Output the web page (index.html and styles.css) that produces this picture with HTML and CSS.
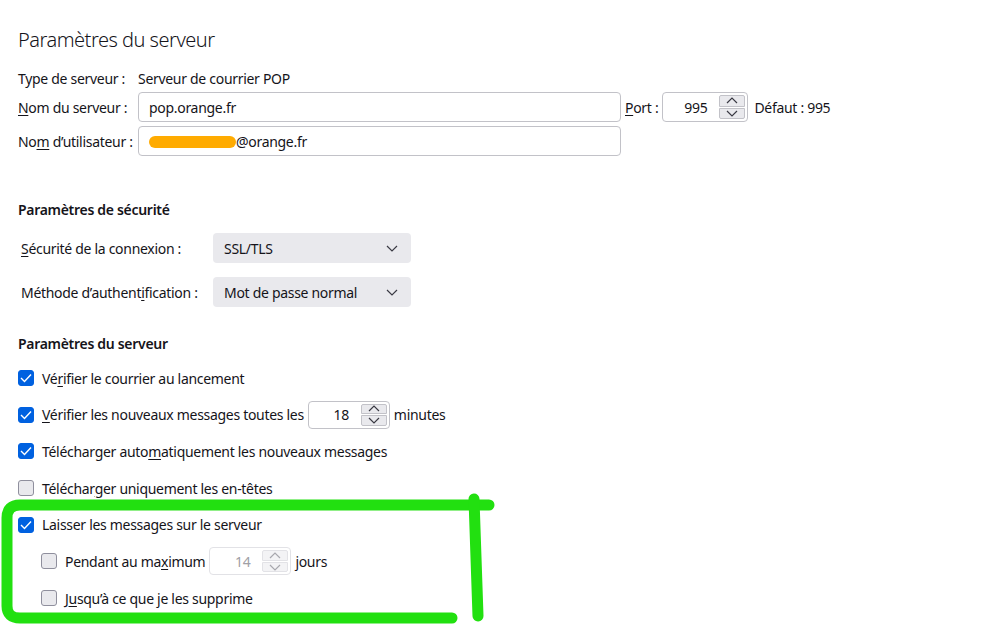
FILE: index.html
```html
<!DOCTYPE html>
<html lang="fr">
<head>
    <meta charset="UTF-8">
    <title>Paramètres du serveur</title>
    <link rel="stylesheet" href="styles.css">
</head>
<body>
    <div class="page">
        <h1 class="title">Paramètres du serveur</h1>

        <div class="server-grid">
            <div class="label">Type de serveur :</div>
            <div class="value">Serveur de courrier POP</div>

            <div class="label"><u>N</u>om du serveur :</div>
            <div class="field-row">
                <div class="textbox wide">pop.orange.fr</div>
                <span class="port-label"><u>P</u>ort :</span>
                <div class="spinner port">
                    <span class="spin-value">995</span>
                    <div class="spin-buttons">
                        <span class="spin-btn"><svg width="12" height="7" viewBox="0 0 12 7"><path d="M1 6 L6 1 L11 6" /></svg></span>
                        <span class="spin-btn"><svg width="12" height="7" viewBox="0 0 12 7"><path d="M1 1 L6 6 L11 1" /></svg></span>
                    </div>
                </div>
                <span class="default">Défaut : 995</span>
            </div>

            <div class="label">No<u>m</u> d’utilisateur :</div>
            <div class="field-row">
                <div class="textbox wide"><span class="blur"></span>@orange.fr</div>
            </div>
        </div>

        <h2 class="section">Paramètres de sécurité</h2>
        <div class="security-grid">
            <div class="label"><u>S</u>écurité de la connexion :</div>
            <div class="select">
                <span>SSL/TLS</span>
                <svg width="12" height="7" viewBox="0 0 12 7"><path d="M1 1 L6 6 L11 1" /></svg>
            </div>
            <div class="label">Méthode d’authent<u>i</u>fication :</div>
            <div class="select">
                <span>Mot de passe normal</span>
                <svg width="12" height="7" viewBox="0 0 12 7"><path d="M1 1 L6 6 L11 1" /></svg>
            </div>
        </div>

        <h2 class="section section-server">Paramètres du serveur</h2>
        <div class="options">
            <div class="option">
                <span class="checkbox checked"><svg width="12" height="10" viewBox="0 0 12 10"><path d="M1 5 L4.5 8.5 L11 1.5" /></svg></span>
                <span>Vé<u>r</u>ifier le courrier au lancement</span>
            </div>
            <div class="option">
                <span class="checkbox checked"><svg width="12" height="10" viewBox="0 0 12 10"><path d="M1 5 L4.5 8.5 L11 1.5" /></svg></span>
                <span><u>V</u>érifier les nouveaux messages toutes les</span>
                <div class="spinner small">
                    <span class="spin-value">18</span>
                    <div class="spin-buttons">
                        <span class="spin-btn"><svg width="12" height="7" viewBox="0 0 12 7"><path d="M1 6 L6 1 L11 6" /></svg></span>
                        <span class="spin-btn"><svg width="12" height="7" viewBox="0 0 12 7"><path d="M1 1 L6 6 L11 1" /></svg></span>
                    </div>
                </div>
                <span>minutes</span>
            </div>
            <div class="option">
                <span class="checkbox checked"><svg width="12" height="10" viewBox="0 0 12 10"><path d="M1 5 L4.5 8.5 L11 1.5" /></svg></span>
                <span>Télécharger auto<u>m</u>atiquement les nouveaux messages</span>
            </div>
            <div class="option">
                <span class="checkbox"></span>
                <span>Téléchar<u>g</u>er uniquement les en-têtes</span>
            </div>
            <div class="option">
                <span class="checkbox checked"><svg width="12" height="10" viewBox="0 0 12 10"><path d="M1 5 L4.5 8.5 L11 1.5" /></svg></span>
                <span>Laisser les messages sur le serveur</span>
            </div>
            <div class="option nested">
                <span class="checkbox"></span>
                <span>Pendant au ma<u>x</u>imum</span>
                <div class="spinner small disabled">
                    <span class="spin-value">14</span>
                    <div class="spin-buttons">
                        <span class="spin-btn"><svg width="12" height="7" viewBox="0 0 12 7"><path d="M1 6 L6 1 L11 6" /></svg></span>
                        <span class="spin-btn"><svg width="12" height="7" viewBox="0 0 12 7"><path d="M1 1 L6 6 L11 1" /></svg></span>
                    </div>
                </div>
                <span>jours</span>
            </div>
            <div class="option nested">
                <span class="checkbox"></span>
                <span>J<u>u</u>squ’à ce que je les supprime</span>
            </div>
        </div>
    </div>

    <!-- annotation au feutre vert -->
    <svg class="marker" width="999" height="624" viewBox="0 0 999 624">
        <path d="M489 505 L20 505 Q7 505 7 518 L7 606 Q7 618 20 618 L452 618" />
        <path d="M474 499 L478 616" />
    </svg>
</body>
</html>
```

FILE: styles.css
```css
* {
    box-sizing: border-box;
}

body {
    margin: 0;
    width: 999px;
    height: 624px;
    overflow: hidden;
    position: relative;
    background: #ffffff;
    color: #15141a;
    font-family: 'Segoe UI', 'Noto Sans', 'Open Sans', sans-serif;
    font-size: 14px;
    letter-spacing: -0.3px;
}

u {
    text-decoration-thickness: 1px;
    text-underline-offset: 2px;
}

.page {
    padding: 28px 0 0 18px;
}

.title {
    margin: 0 0 16px;
    font-size: 20px;
    line-height: 24px;
    font-weight: 300;
    letter-spacing: -0.5px;
}

.label {
    white-space: nowrap;
}

.server-grid {
    display: grid;
    grid-template-columns: 120px auto;
    grid-template-rows: 20px 30px 30px;
    row-gap: 4px;
    align-items: center;
}

.field-row {
    display: flex;
    align-items: center;
}

.textbox {
    height: 30px;
    display: flex;
    align-items: center;
    padding-left: 10px;
    border: 1px solid #c2c2c8;
    border-radius: 4px;
    background: #ffffff;
}

.textbox.wide {
    width: 483px;
}

.blur {
    display: inline-block;
    width: 87px;
    height: 12px;
    margin-top: 2px;
    border-radius: 6px;
    background: #ffab00;
}

.port-label {
    margin: 0 4px 0 4px;
}

.default {
    margin-left: 6px;
}

.spinner {
    display: flex;
    height: 30px;
    border: 1px solid #c2c2c8;
    border-radius: 4px;
    background: #ffffff;
    overflow: hidden;
}

.spinner.port {
    width: 86px;
}

.spinner.small {
    width: 82px;
    height: 28px;
}

.spin-value {
    flex: 1;
    display: flex;
    align-items: center;
    justify-content: flex-end;
    padding-right: 12px;
}

.spin-buttons {
    width: 28px;
    display: flex;
    flex-direction: column;
    padding: 2px 2px 2px 0;
    gap: 1px;
}

.spin-btn {
    flex: 1;
    display: flex;
    align-items: center;
    justify-content: center;
    background: #e9e9ed;
    border: 1px solid #c2c2c8;
}

.spin-btn:first-child {
    border-radius: 2px 2px 0 0;
}

.spin-btn:last-child {
    border-radius: 0 0 2px 2px;
}

.spin-btn svg path {
    fill: none;
    stroke: #3a3a44;
    stroke-width: 1.2;
}

.spinner.disabled {
    border-color: #e2e2e6;
    color: #a0a0a6;
}

.spinner.disabled .spin-btn {
    background: #f3f3f5;
    border-color: #e2e2e6;
}

.spinner.disabled .spin-btn svg path {
    stroke: #a8a8ae;
}

.section {
    margin: 44px 0 13px;
    font-size: 14px;
    line-height: 20px;
    font-weight: 600;
}

.section-server {
    margin: 27px 0 10px;
}

.security-grid {
    display: grid;
    grid-template-columns: 195px 198px;
    row-gap: 14px;
    align-items: center;
}

.security-grid .label {
    padding-left: 3px;
}

.select {
    height: 30px;
    display: flex;
    align-items: center;
    justify-content: space-between;
    padding: 0 13px 0 11px;
    border-radius: 4px;
    background: #e9e9ed;
}

.select svg path {
    fill: none;
    stroke: #3a3a44;
    stroke-width: 1.2;
}

.options {
    display: flex;
    flex-direction: column;
    gap: 8.7px;
}

.option {
    height: 28px;
    display: flex;
    align-items: center;
    gap: 4px;
}

.option.nested {
    padding-left: 23px;
}

.checkbox {
    width: 16px;
    height: 16px;
    margin-right: 4px;
    display: flex;
    align-items: center;
    justify-content: center;
    border: 1px solid #8f8f9d;
    border-radius: 3px;
    background: #e9e9ed;
}

.checkbox.checked {
    border-color: #0061e0;
    background: #0061e0;
}

.checkbox svg path {
    fill: none;
    stroke: #ffffff;
    stroke-width: 1.4;
}

.marker {
    position: absolute;
    left: 0;
    top: 0;
    pointer-events: none;
}

.marker path {
    fill: none;
    stroke: #22e010;
    stroke-width: 11;
    stroke-linecap: round;
    stroke-linejoin: round;
}
```
